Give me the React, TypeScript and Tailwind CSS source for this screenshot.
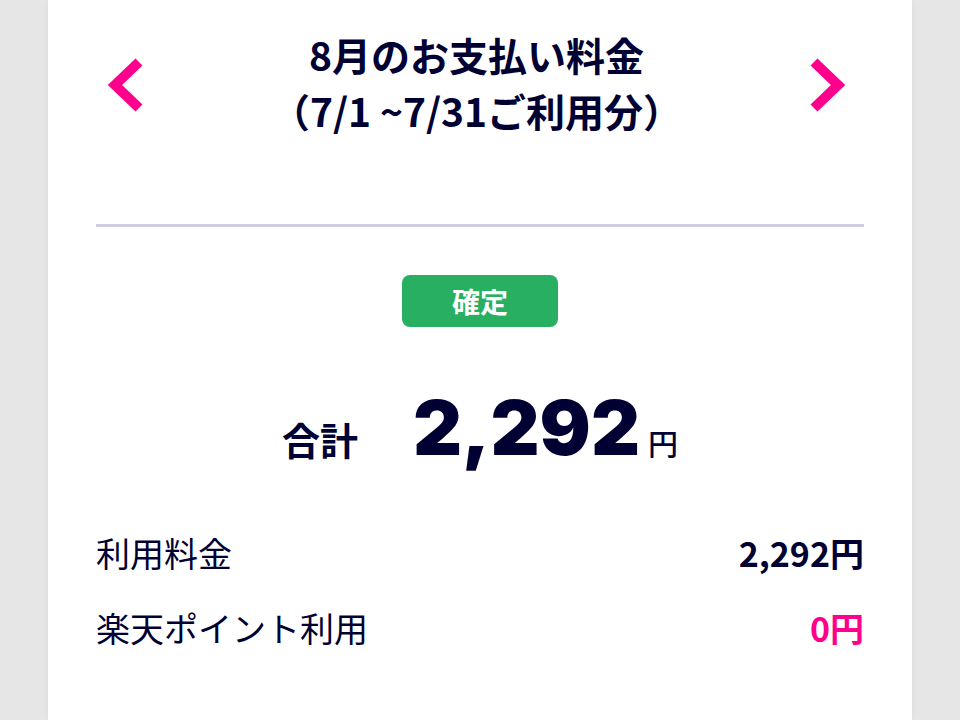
const jp = { fontFamily: '"Noto Sans CJK JP", "Noto Sans", sans-serif' };

function Chevron({ dir }: { dir: 'left' | 'right' }) {
  const pts = dir === 'left' ? '34,5 10,28 34,51' : '6,5 30,28 6,51';
  return (
    <svg width="40" height="56" viewBox="0 0 40 56" className="mt-[6px] shrink-0">
      <polyline points={pts} fill="none" stroke="#ff008c" strokeWidth="10" strokeLinejoin="miter" strokeLinecap="butt" />
    </svg>
  );
}

export default function App() {
  const rows = [
    { label: '利用料金', value: '2,292円', pink: false },
    { label: '楽天ポイント利用', value: '0円', pink: true },
  ];

  return (
    <div className="min-h-screen bg-[#e6e6e6] text-[#000033]" style={jp}>
      <div className="mx-12 min-h-[720px] bg-white px-12 shadow-[0_0_6px_rgba(0,0,0,0.06)]">
        <div className="flex items-center justify-between pt-[26px] pl-[9px] pr-[16px]">
          <Chevron dir="left" />
          <h1 className="text-center text-[39px] font-bold leading-[56px]">
            8月のお支払い料金
            <br />
            （7/1 ~7/31ご利用分）
          </h1>
          <Chevron dir="right" />
        </div>

        <div className="mt-[86px] h-[3px] bg-[#d0cde1]" />

        <div className="mt-[48px] flex justify-center">
          <div className="flex h-[52px] w-[156px] items-center justify-center rounded-lg bg-[#29af62] text-[28px] font-bold text-white">
            確定
          </div>
        </div>

        <div className="mt-[62px] flex items-baseline justify-center">
          <span className="text-[38px] font-bold">合計</span>
          <span className="ml-[55px] text-[76px] font-black leading-none" style={{ fontFamily: 'Inter, "Liberation Sans", sans-serif' }}>
            2,292
          </span>
          <span className="ml-[8px] text-[30px] font-medium">円</span>
        </div>

        <div className="mt-[48px]">
          {rows.map((r) => (
            <div key={r.label} className="flex h-[75px] items-center justify-between">
              <span className="text-[34px]">{r.label}</span>
              <span className={`text-[34px] font-bold ${r.pink ? 'text-[#ff008c]' : ''}`}>{r.value}</span>
            </div>
          ))}
        </div>
      </div>
    </div>
  );
}
